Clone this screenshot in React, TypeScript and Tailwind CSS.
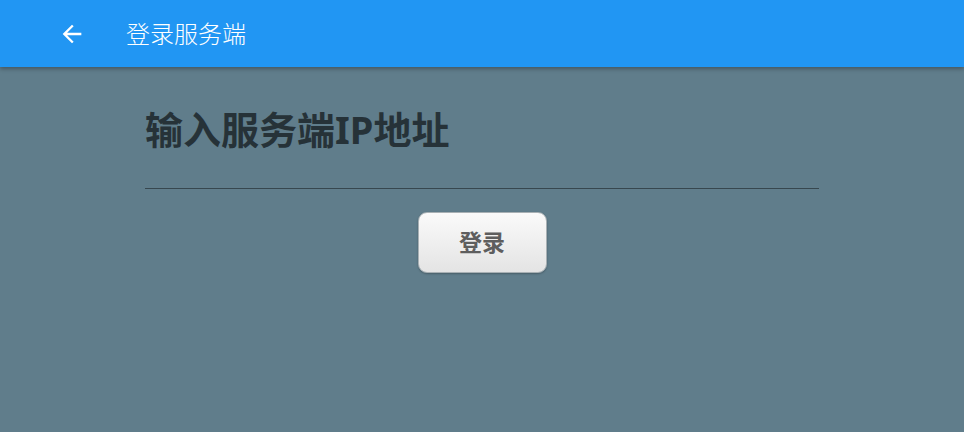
export default function App() {
  return (
    <div
      className="flex h-[432px] w-[964px] flex-col bg-[#607d8b]"
      style={{ fontFamily: '"Noto Sans", "Noto Sans CJK SC", sans-serif' }}
    >
      <header className="relative z-10 flex h-[67px] items-center bg-[#2196f3] shadow-[0_2px_4px_rgba(0,0,0,0.3)]">
        <button className="ml-[58px] flex h-[28px] w-[28px] items-center justify-center text-white">
          <svg viewBox="0 0 24 24" className="h-[28px] w-[28px]" fill="currentColor">
            <path d="M20 11H7.83l5.59-5.59L12 4l-8 8 8 8 1.41-1.41L7.83 13H20v-2z" />
          </svg>
        </button>
        <h1 className="ml-[40px] text-[24px] font-light text-white">登录服务端</h1>
      </header>

      <main className="flex flex-col px-[145px] pt-[38px]">
        <h2 className="text-[38px] font-bold leading-[48px] text-[#263238]">输入服务端IP地址</h2>
        <input
          type="text"
          className="mt-[20px] h-[16px] w-[674px] border-b border-[#37474f] bg-transparent outline-none"
        />
        <div className="mt-[23px] flex justify-center">
          <button className="h-[61px] w-[129px] rounded-[9px] border border-[#a8b0b4] bg-gradient-to-b from-[#fafafa] to-[#e4e4e4] text-[23px] font-bold text-[#5e5e5e] shadow-[0_1px_2px_rgba(0,0,0,0.25)]">
            登录
          </button>
        </div>
      </main>
    </div>
  );
}
